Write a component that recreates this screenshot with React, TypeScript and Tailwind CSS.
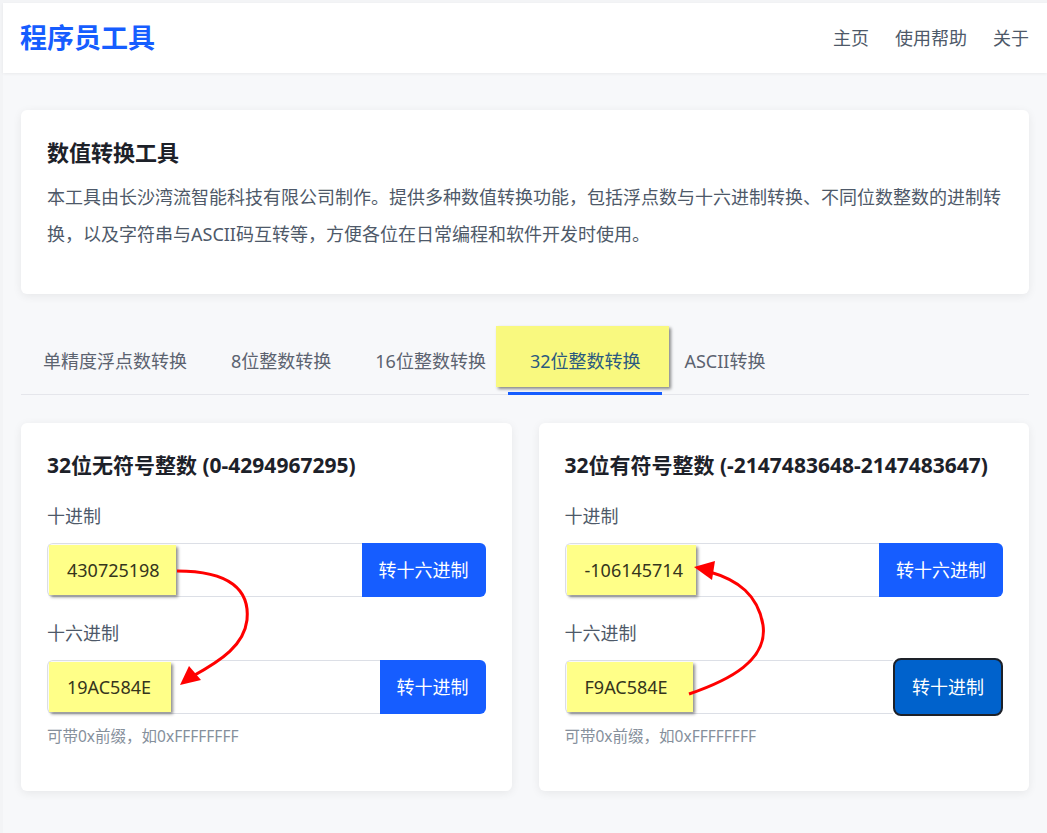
import React from 'react'

const font = { fontFamily: '"Noto Sans", "Noto Sans CJK SC", sans-serif' }

const tabs = ['单精度浮点数转换', '8位整数转换', '16位整数转换', '32位整数转换', 'ASCII转换']

function Field({
  label,
  value,
  button,
  boxW,
  focused,
}: {
  label: string
  value: string
  button: string
  boxW: string
  focused?: boolean
}) {
  return (
    <div>
      <div className="text-[18px] leading-[26px] text-[#4e5969]">{label}</div>
      <div className="mt-[14px] flex h-[54px]">
        <div className="flex-1 rounded-l-md border border-r-0 border-[#dcdfe6] bg-white flex items-center">
          <span
            className={`${boxW} ml-px h-[50px] flex items-center pl-[18px] bg-[#ffff88] text-[18px] text-[#35351c] shadow-[2px_2px_3px_rgba(0,0,0,0.45)]`}
          >
            {value}
          </span>
        </div>
        {focused ? (
          <button className="-my-[2px] h-[58px] rounded-lg border-2 border-[#1d2129] bg-[#0062cc] px-[17px] text-[18px] text-white">
            {button}
          </button>
        ) : (
          <button className="rounded-r-md bg-[#165dff] px-[17px] text-[18px] text-white">{button}</button>
        )}
      </div>
    </div>
  )
}

export default function App() {
  return (
    <div style={font} className="relative min-h-[833px] bg-[#f3f4f6] pl-[3px] pt-[3px]">
      <div className="min-h-[830px] bg-[#f7f8fa]">
        <header className="flex h-[70px] items-center justify-between bg-white pl-[17px] pr-[18px] shadow-[0_1px_3px_rgba(0,0,0,0.06)]">
          <div className="text-[27px] font-bold text-[#165dff]">程序员工具</div>
          <nav className="flex gap-[26px] text-[18px] text-[#4e5969]">
            <a>主页</a>
            <a>使用帮助</a>
            <a>关于</a>
          </nav>
        </header>

        <main className="px-[18px] pt-[37px]">
          <section className="rounded-md bg-white px-[26px] pt-[27px] pb-[41px] shadow-[0_2px_10px_rgba(0,0,0,0.07)]">
            <h1 className="text-[22px] font-bold leading-[30px] text-[#1d2129]">数值转换工具</h1>
            <p className="mt-[12px] text-[18px] leading-[37px] text-[#4e5969]">
              本工具由长沙湾流智能科技有限公司制作。提供多种数值转换功能，包括浮点数与十六进制转换、不同位数整数的进制转换，以及字符串与ASCII码互转等，方便各位在日常编程和软件开发时使用。
            </p>
          </section>

          <div className="mt-[32px] flex border-b border-[#e5e6eb]">
            {tabs.map((t, i) => {
              const active = i === 3
              return (
                <div
                  key={t}
                  className={`relative px-[22px] pt-[22px] pb-[17px] text-[18px] leading-[27px] border-b-[3px] -mb-px ${
                    active ? 'border-[#165dff] text-[#2b5a80]' : 'border-transparent text-[#5c6370]'
                  }`}
                >
                  {active && (
                    <span className="absolute -left-[12px] -right-[7px] top-0 bottom-[5px] bg-[#f9f97f] shadow-[2px_2px_3px_rgba(0,0,0,0.45)]" />
                  )}
                  <span className="relative">{t}</span>
                </div>
              )
            })}
          </div>

          <div className="mt-[28px] grid grid-cols-2 gap-[27px] pb-[40px]">
            <section className="rounded-md bg-white px-[26px] pt-[27px] pb-[44px] shadow-[0_2px_10px_rgba(0,0,0,0.07)]">
              <h2 className="text-[21px] font-bold leading-[30px] text-[#1d2129]">32位无符号整数 (0-4294967295)</h2>
              <div className="mt-[23px]">
                <Field label="十进制" value="430725198" button="转十六进制" boxW="w-[127px]" />
              </div>
              <div className="mt-[23px]">
                <Field label="十六进制" value="19AC584E" button="转十进制" boxW="w-[122px]" />
              </div>
              <div className="mt-[11px] text-[15.5px] leading-[22px] text-[#86909c]">可带0x前缀，如0xFFFFFFFF</div>
            </section>
            <section className="rounded-md bg-white px-[26px] pt-[27px] pb-[44px] shadow-[0_2px_10px_rgba(0,0,0,0.07)]">
              <h2 className="text-[21px] font-bold leading-[30px] text-[#1d2129] whitespace-nowrap">
                32位有符号整数 (-2147483648-2147483647)
              </h2>
              <div className="mt-[23px]">
                <Field label="十进制" value="-106145714" button="转十六进制" boxW="w-[129px]" />
              </div>
              <div className="mt-[23px]">
                <Field label="十六进制" value="F9AC584E" button="转十进制" boxW="w-[126px]" focused />
              </div>
              <div className="mt-[11px] text-[15.5px] leading-[22px] text-[#86909c]">可带0x前缀，如0xFFFFFFFF</div>
            </section>
          </div>
        </main>
      </div>

      <svg className="pointer-events-none absolute left-0 top-0" width="1047" height="833" viewBox="0 0 1047 833">
        <path d="M177 571 C 230 571, 250 590, 247 620 C 244 645, 222 660, 193 676" fill="none" stroke="#ff0000" strokeWidth="3" />
        <polygon points="180,685 189,666 201,680" fill="#ff0000" />
        <path d="M689 694 C 730 680, 768 660, 763 625 C 758 595, 738 580, 710 572" fill="none" stroke="#ff0000" strokeWidth="3" />
        <polygon points="694,567 715,561 712,580" fill="#ff0000" />
      </svg>
    </div>
  )
}
